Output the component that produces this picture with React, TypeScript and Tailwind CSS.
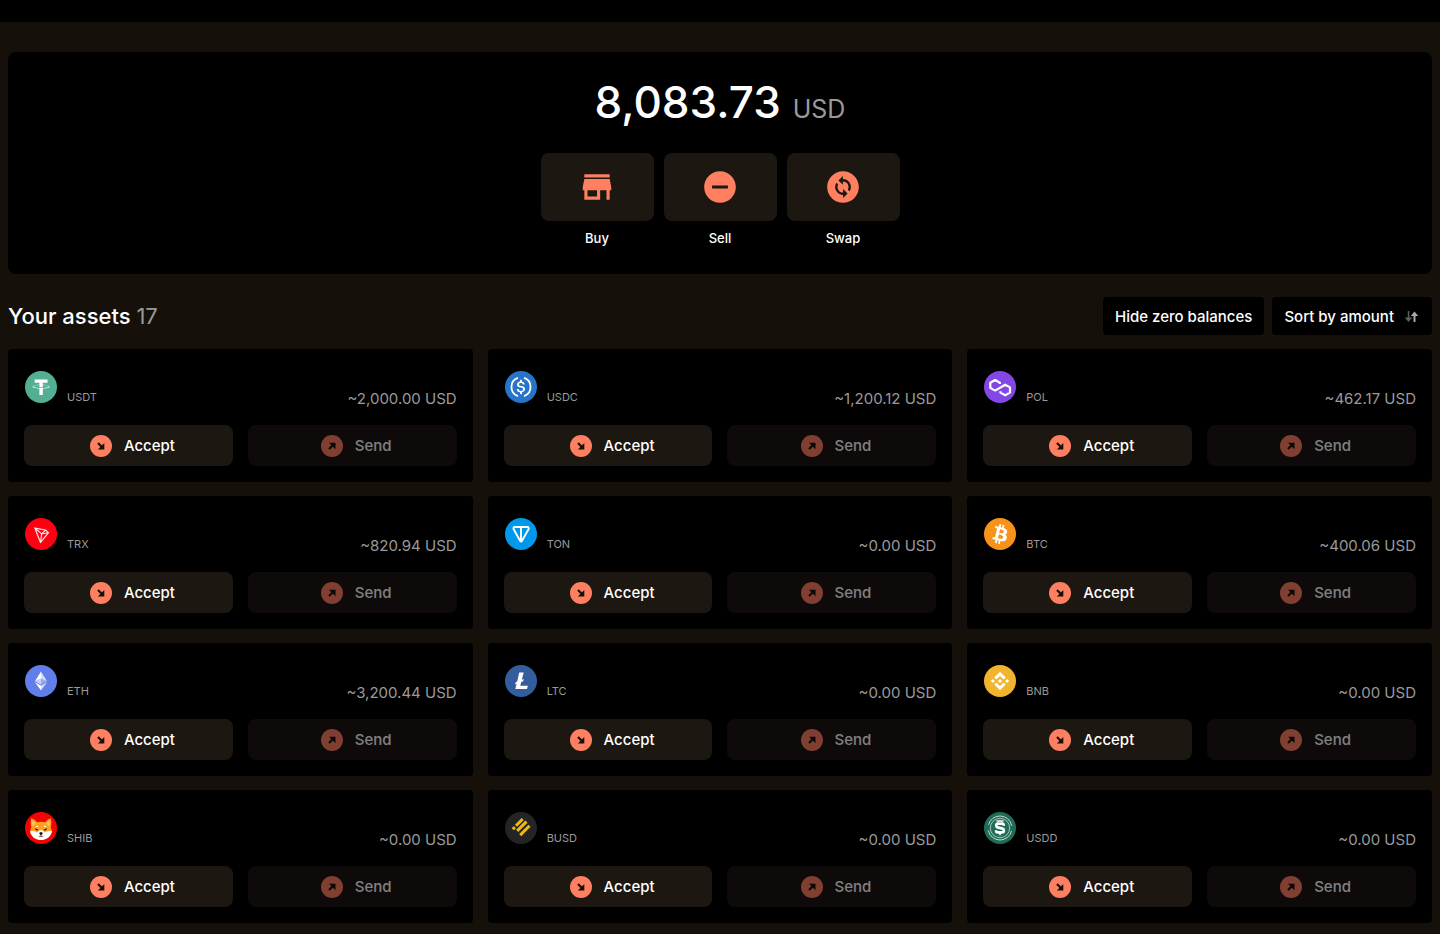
import type { ReactNode } from "react";
import { MdChangeCircle, MdRemoveCircle, MdStore } from "react-icons/md";

type Asset = { symbol: string; amount: string; color: string; glyph: ReactNode };

const assets: Asset[] = [
  {
    symbol: "USDT",
    amount: "2,000.00",
    color: "#53ae94",
    glyph: (
      <path
        transform="translate(2.2 1.8) scale(.87)"
        d="M17.922 17.383v-.002c-.11.008-.677.042-1.942.042-1.01 0-1.721-.03-1.971-.042v.003c-3.888-.171-6.79-.848-6.79-1.658 0-.809 2.902-1.486 6.79-1.66v2.644c.254.018.982.061 1.988.061 1.207 0 1.812-.05 1.925-.06v-2.643c3.88.173 6.775.85 6.775 1.658 0 .81-2.895 1.485-6.775 1.657m0-3.59v-2.366h5.414V7.819H8.595v3.608h5.414v2.365c-4.4.202-7.709 1.074-7.709 2.118 0 1.044 3.309 1.915 7.709 2.118v7.582h3.913v-7.584c4.393-.202 7.694-1.073 7.694-2.116 0-1.043-3.301-1.914-7.694-2.117"
      />
    ),
  },
  {
    symbol: "USDC",
    amount: "1,200.12",
    color: "#2775ca",
    glyph: (
      <>
        <path d="M20.022 18.124c0-2.124-1.28-2.852-3.84-3.156-1.828-.243-2.193-.728-2.193-1.578 0-.85.61-1.396 1.828-1.396 1.097 0 1.707.364 2.011 1.275a.458.458 0 00.427.303h.975a.416.416 0 00.427-.425v-.06a3.04 3.04 0 00-2.743-2.489V9.142c0-.243-.183-.425-.487-.486h-.915c-.243 0-.426.182-.487.486v1.396c-1.829.242-2.986 1.456-2.986 2.974 0 2.002 1.218 2.791 3.778 3.095 1.707.303 2.255.668 2.255 1.639 0 .97-.853 1.638-2.011 1.638-1.585 0-2.133-.667-2.316-1.578-.06-.242-.244-.364-.427-.364h-1.036a.416.416 0 00-.426.425v.06c.243 1.518 1.219 2.61 3.23 2.914v1.457c0 .242.183.425.487.485h.915c.243 0 .426-.182.487-.485V21.34c1.829-.303 3.047-1.578 3.047-3.217z" />
        <path
          d="M13 6.9a9.6 9.6 0 0 0 0 18.2M19 6.9a9.6 9.6 0 0 1 0 18.2"
          fill="none"
          stroke="#fff"
          strokeWidth="1.8"
        />
      </>
    ),
  },
  {
    symbol: "POL",
    amount: "462.17",
    color: "#8247e5",
    glyph: (
      <path
        d="M15.900 13v-1.300L11.100 9l-4.800 2.700v5.200l4.800 2.700L21.200 13.700l4.800 2.700v5.200l-4.800 2.700-4.800-2.700v-1.300"
        fill="none"
        stroke="#fff"
        strokeWidth="2.200"
        strokeLinejoin="round"
      />
    ),
  },
  {
    symbol: "TRX",
    amount: "820.94",
    color: "#ff0013",
    glyph: (
      <path
        transform="translate(3 3.6) scale(.82)"
        stroke="#fff"
        strokeWidth=".3"
        d="M21.932 9.913L7.5 7.257l7.595 19.112 10.583-12.894-3.746-3.562zm-.232 1.17l2.208 2.099-6.038 1.093 3.83-3.192zm-5.142 2.973l-6.364-5.278 10.402 1.914-4.038 3.364zm-.453.934l-1.038 8.58L9.472 9.487l6.633 5.502zm.96.455l6.687-1.21-7.67 9.343.983-8.133z"
      />
    ),
  },
  {
    symbol: "TON",
    amount: "0.00",
    color: "#0098ea",
    glyph: (
      <path
        d="M10 9h12.2c1.3 0 2 1.2 1.3 2.3L16.9 23c-.4.6-1.3.6-1.7 0L8.7 11.3C8 10.2 8.7 9 10 9zM16 9v14"
        fill="none"
        stroke="#fff"
        strokeWidth="1.9"
      />
    ),
  },
  {
    symbol: "BTC",
    amount: "400.06",
    color: "#f7931a",
    glyph: (
      <path d="M23.189 14.02c.314-2.096-1.283-3.223-3.465-3.975l.708-2.84-1.728-.43-.69 2.765c-.454-.114-.92-.22-1.385-.326l.695-2.783L15.596 6l-.708 2.839c-.376-.086-.746-.17-1.104-.26l.002-.009-2.384-.595-.46 1.846s1.283.294 1.256.312c.7.175.826.638.805 1.006l-.806 3.235c.048.012.11.03.18.057l-.183-.045-1.13 4.532c-.086.212-.303.531-.793.41.018.025-1.256-.313-1.256-.313l-.858 1.978 2.25.561c.418.105.828.215 1.231.318l-.715 2.872 1.727.43.708-2.84c.472.127.93.245 1.378.357l-.706 2.828 1.728.43.715-2.866c2.948.558 5.164.333 6.097-2.333.752-2.146-.037-3.385-1.588-4.192 1.13-.26 1.98-1.003 2.207-2.538zm-3.95 5.538c-.533 2.147-4.148.986-5.32.695l.95-3.805c1.172.293 4.929.872 4.37 3.11zm.535-5.569c-.487 1.953-3.495.96-4.47.717l.86-3.45c.975.243 4.118.696 3.61 2.733z" />
    ),
  },
  {
    symbol: "ETH",
    amount: "3,200.44",
    color: "#627eea",
    glyph: (
      <g transform="translate(2.8 3.2) scale(.8)">
        <path fillOpacity=".75" d="M16.498 4v8.87l7.497 3.35z" />
        <path d="M16.498 4L9 16.22l7.498-3.35z" />
        <path fillOpacity=".75" d="M16.498 21.968v6.027L24 17.616z" />
        <path d="M16.498 27.995v-6.028L9 17.616z" />
        <path fillOpacity=".35" d="M16.498 20.573l7.497-4.353-7.497-3.348z" />
        <path fillOpacity=".65" d="M9 16.22l7.498 4.353v-7.701z" />
      </g>
    ),
  },
  {
    symbol: "LTC",
    amount: "0.00",
    color: "#345d9d",
    glyph: (
      <path d="M14.2 7.500h4.500l-1.900 7.300 2-.8-.6 2.300-2 .8-.9 3.700h7.500l-.8 3.300H10.300l1.300-5.200-1.500.6.6-2.300 1.500-.6z" />
    ),
  },
  {
    symbol: "BNB",
    amount: "0.00",
    color: "#f0b52d",
    glyph: (
      <path
        transform="translate(1.2 1.2) scale(.925)"
        d="M12.116 14.404L16 10.52l3.886 3.886 2.26-2.26L16 6l-6.144 6.144 2.26 2.26zM6 16l2.26-2.26L10.52 16l-2.26 2.26L6 16zm6.116 1.596L16 21.48l3.886-3.886 2.26 2.259L16 26l-6.144-6.144-.003-.003 2.263-2.257zM21.48 16l2.26-2.26L26 16l-2.26 2.26L21.48 16zm-3.188-.002h.002V16L16 18.294l-2.291-2.29-.004-.004.004-.003.401-.402.195-.195L16 13.706l2.293 2.293z"
      />
    ),
  },
  {
    symbol: "SHIB",
    amount: "0.00",
    color: "#f00500",
    glyph: (
      <>
        <path
          fill="#ffa01e"
          d="M6.300 6.200c2.300.7 4.300 2.200 5.700 4.100 2.600-.9 5.500-.9 8.100 0 1.400-1.900 3.400-3.400 5.700-4.100.9 3.300.6 6.200-.1 9.100l1.300 4.200-3.800 5.300-7.200 3.200-7.200-3.200L5 19.500l1.300-4.200c-.7-2.900-.9-5.800 0-9.100z"
        />
        <path fill="#ffc46b" d="M7.500 8.200c1.500.8 2.600 2 3.300 3.400l-3.100 3c-.6-2.100-.7-4.300-.2-6.400zM24.500 8.200c-1.500.8-2.600 2-3.300 3.400l3.100 3c.6-2.100.7-4.300.2-6.400z" />
        <path d="M5 19c2.600-.2 5 .1 7 1.400l2.600-2.100h2.800l2.600 2.100c2-1.300 4.400-1.600 7-1.400-.6 5-5 9-11 9.100-6-.1-10.400-4.100-11-9.100z" />
        <path d="M10.600 14.200l2-.6.6 1.300-1.900.2zM21.400 14.200l-2-.6-.6 1.300 1.900.2z" />
        <path fill="#1a0d00" d="M9.800 16.200l3.700 1.500-.8.900-1.900-.5zM22.200 16.200l-3.700 1.500.8.900 1.900-.5zM14.300 20.700c1.100-.6 2.300-.6 3.400 0l-.4 1.500-.9.700v1.100h-.8v-1.100l-.9-.7z" />
        <path d="M13.600 24.200c1.600.5 3.200.5 4.800 0" fill="none" stroke="#1a0d00" strokeWidth=".6" />
      </>
    ),
  },
  {
    symbol: "BUSD",
    amount: "0.00",
    color: "#242424",
    glyph: (
      <path
        d="M11 13.700l6.700-6.700M7.800 17.200L9.900 15.100M12.200 18.900l9.300-9.300M15.200 23.100l9.300-9.300"
        fill="none"
        stroke="#f0b90b"
        strokeWidth="3"
      />
    ),
  },
  {
    symbol: "USDD",
    amount: "0.00",
    color: "#216c58",
    glyph: (
      <g fill="none" stroke="#fff">
        <circle cx="16" cy="16" r="12" strokeWidth=".9" strokeDasharray="32 5.7" strokeDashoffset="-3" strokeOpacity=".8" />
        <circle cx="16" cy="16" r="9.7" strokeWidth=".8" strokeOpacity=".75" />
        <path
          strokeWidth="2.700"
          d="M19.700 13.800v-.5c0-1-.8-1.700-1.800-1.700h-3.900c-1.100 0-1.700.8-1.700 1.700v.5c0 .8.500 1.400 1.300 1.600l4.900 1.200c.8.200 1.300.8 1.300 1.600v.5c0 1-.8 1.700-1.800 1.700h-4.100c-1 0-1.800-.7-1.800-1.700v-.5"
        />
        <path strokeWidth="1.600" d="M12.500 9h7M16 20.500v2.800" />
      </g>
    ),
  },
];

function CircleArrow({ direction }: { direction: "in" | "out" }) {
  return (
    <svg viewBox="0 0 22 22" className="size-[22px] shrink-0" aria-hidden="true">
      <circle cx="11" cy="11" r="11" fill="#ff7f61" />
      <g transform={direction === "out" ? "rotate(-90 11 11)" : undefined}>
        <path d="M8 8l4.5 4.5" stroke="#17110b" strokeWidth="2.2" fill="none" />
        <path d="M14.3 8v6.5H7.8z" fill="#17110b" />
      </g>
    </svg>
  );
}

function QuickAction({ label, icon }: { label: string; icon: ReactNode }) {
  return (
    <button type="button" className="flex w-[113px] flex-col items-center gap-2 text-[13px] leading-[18px] font-medium text-white">
      <span className="flex h-[68px] w-full items-center justify-center rounded-lg bg-[#1c1711] text-[38px] text-[#ff7f61]">
        {icon}
      </span>
      {label}
    </button>
  );
}

function AssetCard({ asset }: { asset: Asset }) {
  return (
    <article className="rounded bg-black px-4 pt-[22px] pb-4">
      <div className="flex h-[54px] items-start">
        <svg viewBox="0 0 32 32" className="ml-px size-8 shrink-0" fill="#fff" aria-hidden="true">
          <circle cx="16" cy="16" r="16" fill={asset.color} />
          {asset.glyph}
        </svg>
        <h3 className="mt-[18px] ml-[10px] text-[11px] leading-4 text-[#9a9a9a]">{asset.symbol}</h3>
        <p className="mt-[18px] ml-auto text-[15px] leading-5 text-[#9a9a9a]">~{asset.amount} USD</p>
      </div>
      <div className="grid grid-cols-2 gap-[15px]">
        <button
          type="button"
          className="flex h-[41px] items-center justify-center gap-3 rounded-lg bg-[#1c1711] pt-px pl-2 text-[15px] font-medium text-white"
        >
          <CircleArrow direction="in" />
          Accept
        </button>
        <button
          type="button"
          disabled
          className="flex h-[41px] items-center justify-center gap-3 rounded-lg bg-[#1a1412] pt-px pl-2 text-[15px] font-medium text-white opacity-50"
        >
          <CircleArrow direction="out" />
          Send
        </button>
      </div>
    </article>
  );
}

export default function App() {
  return (
    <div className="min-h-screen bg-[#15100a] font-[Inter,sans-serif]">
      <header className="h-[22px] bg-black" />
      <main className="px-2 pt-[30px] pb-3">
        <section className="flex flex-col items-center gap-[22px] rounded-lg bg-black pt-[21px] pb-[27px]">
          <p className="flex items-baseline gap-3">
            <span className="text-[44px] leading-[58px] font-medium text-white">8,083.73</span>
            <span className="text-[25px] leading-8 text-[#9a9a9a]">USD</span>
          </p>
          <div className="flex gap-[10px]">
            <QuickAction label="Buy" icon={<MdStore />} />
            <QuickAction label="Sell" icon={<MdRemoveCircle />} />
            <QuickAction label="Swap" icon={<MdChangeCircle />} />
          </div>
        </section>

        <section>
          <div className="flex items-center justify-between pt-[23px] pb-[14px]">
            <h2 className="text-[22px] leading-7 font-medium text-white">
              Your assets <span className="font-normal text-[#9a9a9a]">17</span>
            </h2>
            <div className="flex gap-2">
              <button type="button" className="h-[38px] rounded bg-black px-3 pt-0.5 text-[15px] font-medium text-white">
                Hide zero balances
              </button>
              <button
                type="button"
                className="flex h-[38px] items-center gap-[10px] rounded bg-black px-3 pt-0.5 text-[15px] font-medium text-white"
              >
                Sort by amount
                <svg viewBox="0 0 16 12" className="h-3 w-4" aria-hidden="true">
                  <path d="M4.500 0v7" stroke="#606060" strokeWidth="1.500" />
                  <path d="M.8 6.500h7.400L4.500 11z" fill="#606060" />
                  <path d="M10.500 11V4" stroke="#a8a8a8" strokeWidth="2" />
                  <path d="M6.800 5h7.400L10.500.5z" fill="#a8a8a8" />
                </svg>
              </button>
            </div>
          </div>
          <div className="grid grid-cols-3 gap-x-[15px] gap-y-[14px]">
            {assets.map((asset) => (
              <AssetCard key={asset.symbol} asset={asset} />
            ))}
          </div>
        </section>
      </main>
    </div>
  );
}
